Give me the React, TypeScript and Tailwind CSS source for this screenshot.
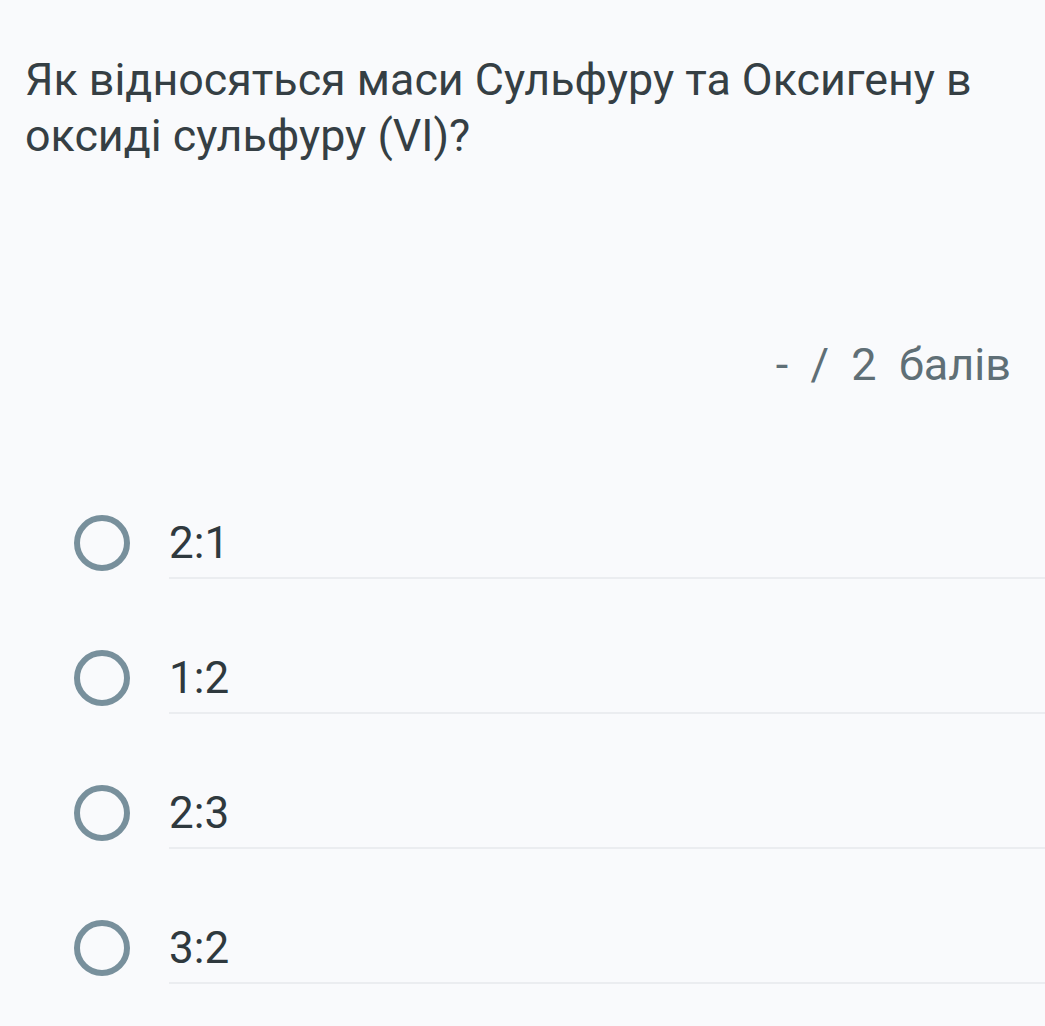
const options = ["2:1", "1:2", "2:3", "3:2"];

function Radio() {
  return (
    <span className="block w-[56px] h-[56px] rounded-full border-[6px] border-[#78909c] shrink-0" />
  );
}

export default function App() {
  return (
    <div className="min-h-[1026px] w-full bg-[#f9fafc] text-[#37474f] font-['Roboto',sans-serif] overflow-hidden">
      <h1 className="pl-[25px] pr-[30px] pt-[52px] text-[44.8px] leading-[56px] font-normal text-[#353f44]">
        Як відносяться маси Сульфуру та Оксигену в оксиді сульфуру (VI)?
      </h1>

      <div className="flex justify-end pr-[34px] pt-[177px] text-[45px] leading-[48px] text-[#5f6f76] whitespace-pre">
        {"-  /  2  балів"}
      </div>

      <div className="pt-[126px] flex flex-col">
        {options.map((o) => (
          <div key={o} className="flex items-start pl-[74px] h-[135px]">
            <Radio />
            <div className="ml-[39px] flex-1 flex flex-col">
              <div className="text-[44px] leading-[56px] text-[#2f393e]">{o}</div>
              <div className="mt-[6px] h-[2px] bg-[#ebedf0]" />
            </div>
          </div>
        ))}
      </div>
    </div>
  );
}
